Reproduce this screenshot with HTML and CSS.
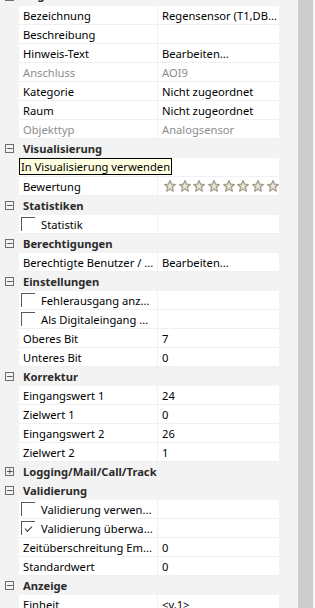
FILE: index.html
```html
<!DOCTYPE html>
<html lang="de">
<head>
  <meta charset="UTF-8">
  <title>Eigenschaften</title>
  <link rel="stylesheet" href="styles.css">
</head>
<body>
  <div class="panel">
    <div class="grid">
      <div class="rows">
        <div class="cat"><span class="toggle">−</span><span class="cat-name">Allgemein</span></div>
        <div class="row"><div class="name">Bezeichnung</div><div class="value">Regensensor (T1,DB...</div></div>
        <div class="row"><div class="name">Beschreibung</div><div class="value"></div></div>
        <div class="row"><div class="name">Hinweis-Text</div><div class="value">Bearbeiten...</div></div>
        <div class="row disabled"><div class="name">Anschluss</div><div class="value">AOI9</div></div>
        <div class="row"><div class="name">Kategorie</div><div class="value">Nicht zugeordnet</div></div>
        <div class="row"><div class="name">Raum</div><div class="value">Nicht zugeordnet</div></div>
        <div class="row disabled"><div class="name">Objekttyp</div><div class="value">Analogsensor</div></div>

        <div class="cat"><span class="toggle">−</span><span class="cat-name">Visualisierung</span></div>
        <div class="row has-tip">
          <div class="name"></div><div class="value"></div>
          <div class="tooltip">In Visualisierung verwenden</div>
        </div>
        <div class="row"><div class="name">Bewertung</div><div class="value stars" id="stars"></div></div>

        <div class="cat"><span class="toggle">−</span><span class="cat-name">Statistiken</span></div>
        <div class="row"><div class="name"><span class="check"></span>Statistik</div><div class="value"></div></div>

        <div class="cat"><span class="toggle">−</span><span class="cat-name">Berechtigungen</span></div>
        <div class="row"><div class="name">Berechtigte Benutzer / ...</div><div class="value">Bearbeiten...</div></div>

        <div class="cat"><span class="toggle">−</span><span class="cat-name">Einstellungen</span></div>
        <div class="row"><div class="name"><span class="check"></span>Fehlerausgang anz...</div><div class="value"></div></div>
        <div class="row"><div class="name"><span class="check"></span>Als Digitaleingang ...</div><div class="value"></div></div>
        <div class="row"><div class="name">Oberes Bit</div><div class="value">7</div></div>
        <div class="row"><div class="name">Unteres Bit</div><div class="value">0</div></div>

        <div class="cat"><span class="toggle">−</span><span class="cat-name">Korrektur</span></div>
        <div class="row"><div class="name">Eingangswert 1</div><div class="value">24</div></div>
        <div class="row"><div class="name">Zielwert 1</div><div class="value">0</div></div>
        <div class="row"><div class="name">Eingangswert 2</div><div class="value">26</div></div>
        <div class="row"><div class="name">Zielwert 2</div><div class="value">1</div></div>

        <div class="cat"><span class="toggle">+</span><span class="cat-name">Logging/Mail/Call/Track</span></div>

        <div class="cat"><span class="toggle">−</span><span class="cat-name">Validierung</span></div>
        <div class="row"><div class="name"><span class="check"></span>Validierung verwen...</div><div class="value"></div></div>
        <div class="row"><div class="name"><span class="check checked"></span>Validierung überwa...</div><div class="value"></div></div>
        <div class="row"><div class="name">Zeitüberschreitung Em...</div><div class="value">0</div></div>
        <div class="row"><div class="name">Standardwert</div><div class="value">0</div></div>

        <div class="cat"><span class="toggle">−</span><span class="cat-name">Anzeige</span></div>
        <div class="row"><div class="name">Einheit</div><div class="value">&lt;v,1&gt;</div></div>
      </div>
    </div>
    <div class="scrollbar"></div>
  </div>

  <script>
    // Bewertung: 9 leere Sterne (der letzte wird abgeschnitten)
    const star = '<svg class="star" width="12" height="12" viewBox="0 0 12 12">' +
      '<path d="M6 0.6 L7.6 4.1 L11.4 4.5 L8.5 7 L9.4 11.2 L6 9.1 L2.6 11.2 L3.5 7 L0.6 4.5 L4.4 4.1 Z" fill="#ddd8c8" stroke="#9d9783" stroke-width="1.1" stroke-linejoin="round"/>' +
      '<path d="M6 4 L7 6 L6 7.6 L5 6 Z" fill="#f3f1ea"/></svg>';
    document.getElementById('stars').innerHTML = star.repeat(9);
  </script>
</body>
</html>
```

FILE: styles.css
```css
body {
  margin: 0;
  padding: 0;
  font-family: "Noto Sans", "Open Sans", sans-serif;
  font-size: 11.2px;
  color: #000;
  background-color: #f3f3f3;
}

.panel {
  display: flex;
  width: 315px;
  height: 608px;
  overflow: hidden;
}

.grid {
  width: 298px;
  overflow: hidden;
}

.rows {
  margin-top: -13px;
  width: 279px;
}

.cat {
  display: flex;
  align-items: center;
  height: 19px;
  background-color: #f3f3f3;
}

.cat:first-child .cat-name {
  position: relative;
  top: -2px;
}

.toggle {
  box-sizing: border-box;
  width: 9px;
  height: 9px;
  margin: 0 9px 0 5px;
  border: 1px solid #6e6e6e;
  font-family: "DejaVu Sans", sans-serif;
  font-size: 9px;
  line-height: 6px;
  text-align: center;
  color: #333;
  overflow: hidden;
}

.cat-name {
  font-weight: bold;
  color: #2b2b2b;
  white-space: nowrap;
}

.row {
  position: relative;
  display: flex;
  height: 18px;
  margin-left: 19px;
  background-color: #fff;
  border-bottom: 1px solid #f0f0f0;
}

.name {
  display: flex;
  align-items: center;
  width: 134px;
  padding-left: 4px;
  border-right: 1px solid #f0f0f0;
  white-space: nowrap;
  overflow: hidden;
}

.value {
  display: flex;
  align-items: center;
  flex: 1;
  padding-left: 4px;
  white-space: nowrap;
  overflow: hidden;
}

.disabled .name,
.disabled .value {
  color: #8d8d8d;
}

.check {
  box-sizing: border-box;
  flex: none;
  width: 14px;
  height: 14px;
  margin: 0 6px 0 -2px;
  border-top: 1px solid #5a5a5a;
  border-left: 1px solid #5a5a5a;
  position: relative;
}

.check.checked::after {
  content: "";
  position: absolute;
  left: 3px;
  top: 4px;
  width: 6px;
  height: 3px;
  border-left: 1px solid #333;
  border-bottom: 1px solid #333;
  transform: rotate(-45deg);
}

.stars {
  gap: 2.7px;
  padding-left: 6px;
}

.star {
  flex: none;
}

.tooltip {
  position: absolute;
  left: 0;
  top: 0;
  height: 15px;
  line-height: 15px;
  padding: 0 1px;
  background-color: #ffffe1;
  border: 1px solid #000;
  white-space: nowrap;
}

.scrollbar {
  width: 15px;
  background-color: #cdcdcd;
}
```
